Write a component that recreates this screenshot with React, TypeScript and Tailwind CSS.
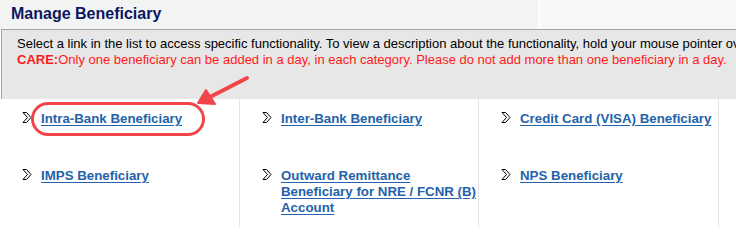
import React from "react";

type Item = { label: string };

const rows: Item[][] = [
  [
    { label: "Intra-Bank Beneficiary" },
    { label: "Inter-Bank Beneficiary" },
    { label: "Credit Card (VISA) Beneficiary" },
  ],
  [
    { label: "IMPS Beneficiary" },
    { label: "Outward Remittance Beneficiary for NRE / FCNR (B) Account" },
    { label: "NPS Beneficiary" },
  ],
];

const Chevron = () => (
  <svg width="10" height="11" viewBox="0 0 10 11" className="shrink-0 mt-[1px]">
    <polygon
      points="1,0.5 4.5,0.5 9,5.5 4.5,10.5 1,10.5 5.5,5.5"
      fill="#fff"
      stroke="#000"
      strokeWidth="1"
    />
  </svg>
);

const LinkCell = ({ label }: Item) => (
  <div className="flex items-start gap-[9px] pl-[22px]">
    <Chevron />
    <div className="w-[198px] shrink-0 text-[13.3px] leading-[16px]">
      <a
        href="#"
        className="font-bold text-[#2462aa] underline underline-offset-2"
      >
        {label}
      </a>
    </div>
  </div>
);

const App = () => {
  return (
    <div
      className="relative w-[736px] h-[227px] overflow-hidden bg-white"
      style={{ fontFamily: '"Liberation Sans", Arial, sans-serif' }}
    >
      {/* header */}
      <div className="flex h-[29px] bg-[#f2f4f4]">
        <h1 className="w-[538px] pl-[11px] pt-[4px] text-[16px] font-bold leading-[20px] text-[#0d1660]">
          Manage Beneficiary
        </h1>
        <div className="w-[3px] bg-[#fbfcfc]" />
        <div className="flex-1 bg-[#f6f7f7]" />
      </div>

      {/* info panel */}
      <div className="ml-[1px] h-[70px] overflow-hidden border-t border-l border-[#a4a4a4] bg-[#e7e7e7] pl-[15px] pt-[6px] text-[13px] leading-[16px] whitespace-nowrap">
        <p className="text-black">
          Select a link in the list to access specific functionality. To view a description about the functionality, hold your mouse pointer over the link.
        </p>
        <p className="text-[#ff1a1a]">
          <span className="font-bold">CARE:</span>Only one beneficiary can be added in a day, in each category. Please do not add more than one beneficiary in a day.
        </p>
      </div>

      {/* link grid */}
      <div className="grid grid-cols-[240px_239px_240px_1fr] h-[128px]">
        {[0, 1, 2].map((c) => (
          <div
            key={c}
            className={`flex flex-col gap-[41px] pt-[12px] border-r ${
              c === 0 ? "border-[#efdfe2]" : "border-[#e2e2e2]"
            }`}
          >
            {rows.map((r, i) => (
              <LinkCell key={i} {...r[c]} />
            ))}
          </div>
        ))}
        <div />
      </div>

      {/* annotation overlay */}
      <div className="absolute left-[31px] top-[102px] w-[174px] h-[34px] rounded-[17px] border-[3px] border-[#f2454a]" />
      <svg className="absolute left-0 top-0" width="736" height="227" viewBox="0 0 736 227">
        <line x1="247" y1="78" x2="210" y2="97" stroke="#f2454a" strokeWidth="4" strokeLinecap="round" />
        <polygon points="198,103 206,90 215,104" fill="#f2454a" stroke="#f2454a" strokeWidth="2" strokeLinejoin="round" />
      </svg>
    </div>
  );
};

export default App;
